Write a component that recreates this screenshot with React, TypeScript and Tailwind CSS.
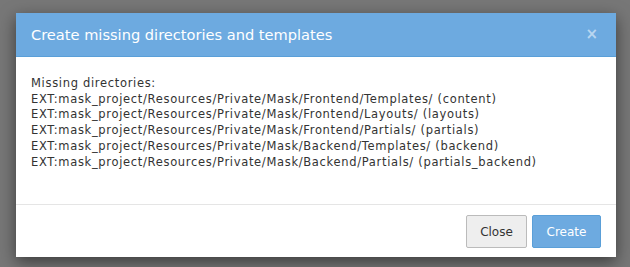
import React from "react";

const lines = [
  "EXT:mask_project/Resources/Private/Mask/Frontend/Templates/ (content)",
  "EXT:mask_project/Resources/Private/Mask/Frontend/Layouts/ (layouts)",
  "EXT:mask_project/Resources/Private/Mask/Frontend/Partials/ (partials)",
  "EXT:mask_project/Resources/Private/Mask/Backend/Templates/ (backend)",
  "EXT:mask_project/Resources/Private/Mask/Backend/Partials/ (partials_backend)",
];

export default function App() {
  return (
    <div
      className="w-[630px] h-[267px] bg-[#777777] pt-[13px] pl-[16px]"
      style={{ fontFamily: '"DejaVu Sans", Verdana, sans-serif' }}
    >
      <div className="w-[600px] h-[244px] bg-white shadow-[0_5px_15px_rgba(0,0,0,0.5)] flex flex-col">
        <div className="h-[44px] bg-[#6daae0] border-b border-[#5a9fd8] flex items-center justify-between pl-[15px] pr-[18px]">
          <span className="text-white text-[14.6px] leading-[21px]">
            Create missing directories and templates
          </span>
          <span className="text-[#b9d6f0] text-[15px] font-bold leading-none">×</span>
        </div>
        <div className="px-[15px] pt-[19px] text-[11.5px] tracking-[0.68px] leading-[15.7px] text-[#333333] h-[147px] whitespace-nowrap">
          <div>Missing directories:</div>
          {lines.map((l) => (
            <div key={l}>{l}</div>
          ))}
        </div>
        <div className="border-t border-[#e5e5e5] flex justify-end gap-[5px] pr-[15px] pt-[10px]">
          <button className="h-[33px] w-[61px] bg-[#eeeeee] border border-[#bbbbbb] rounded-[2px] text-[12px] text-[#333333]">
            Close
          </button>
          <button className="h-[33px] w-[69px] bg-[#6daae0] border border-[#5a9fd8] rounded-[2px] text-[12px] text-white">
            Create
          </button>
        </div>
      </div>
    </div>
  );
}
